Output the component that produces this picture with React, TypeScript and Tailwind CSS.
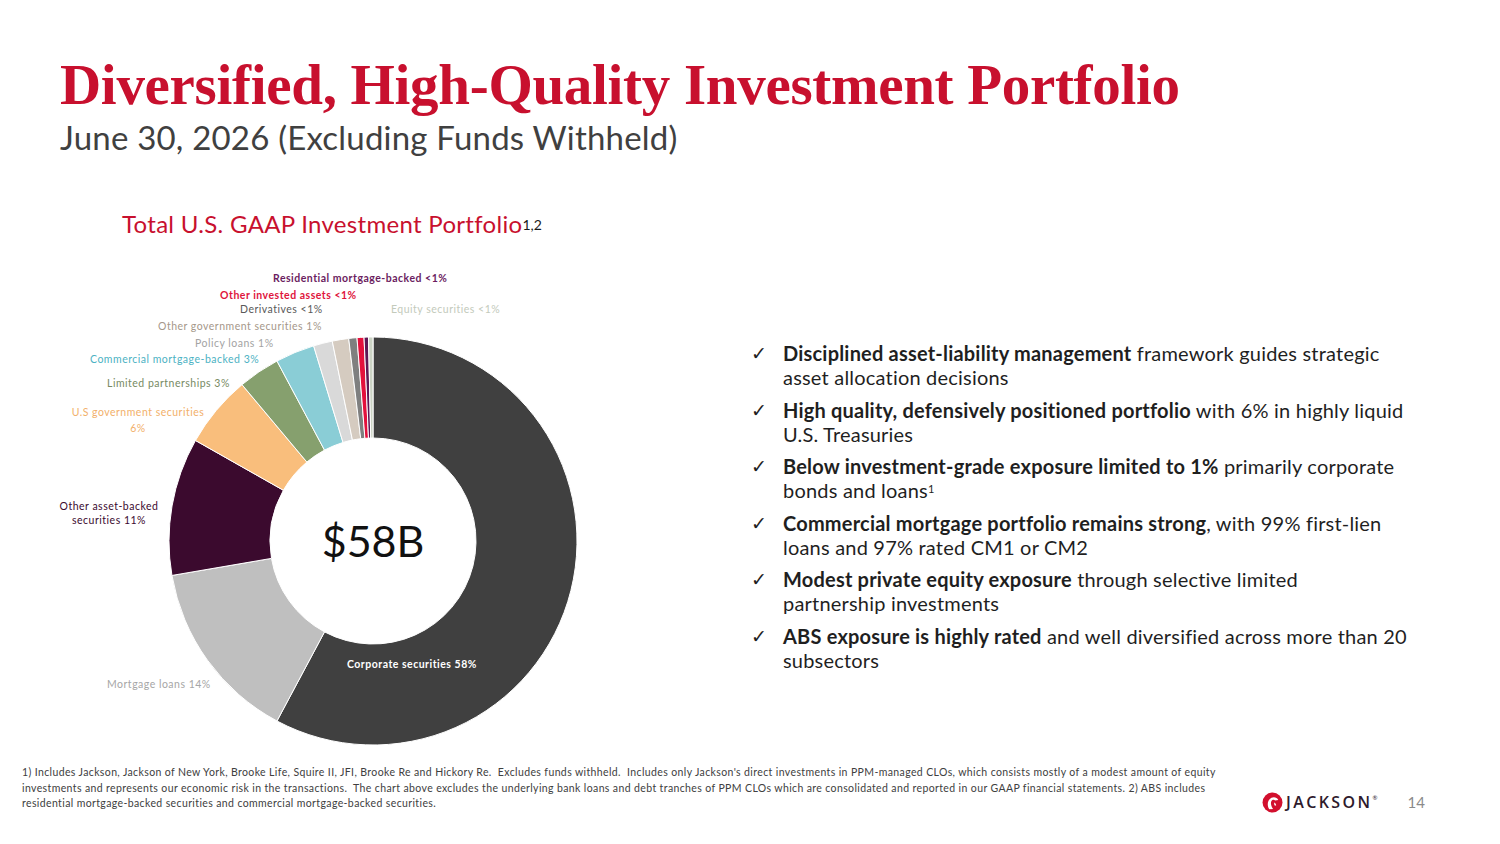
import React from 'react';

type Slice = { name: string; value: number; color: string };

// share of the portfolio, clockwise from 12 o'clock
const slices: Slice[] = [
  { name: 'Corporate securities', value: 57.8, color: '#404040' },
  { name: 'Mortgage loans', value: 14.5, color: '#bfbfbf' },
  { name: 'Other asset-backed securities', value: 10.9, color: '#3b0a2e' },
  { name: 'U.S government securities', value: 5.7, color: '#f9be7c' },
  { name: 'Limited partnerships', value: 3.3, color: '#86a06e' },
  { name: 'Commercial mortgage-backed', value: 3.1, color: '#8acdd6' },
  { name: 'Policy loans', value: 1.5, color: '#d9d9d9' },
  { name: 'Other government securities', value: 1.3, color: '#d5cbc0' },
  { name: 'Derivatives', value: 0.65, color: '#7f7f7f' },
  { name: 'Other invested assets', value: 0.55, color: '#e3103c' },
  { name: 'Residential mortgage-backed', value: 0.35, color: '#5e1755' },
  { name: 'Equity securities', value: 0.35, color: '#cbd3c4' },
];

const CX = 373;
const CY = 303;
const R_OUT = 204;
const R_IN = 103;

const point = (r: number, deg: number) => {
  const a = ((deg - 90) * Math.PI) / 180;
  return [CX + r * Math.cos(a), CY + r * Math.sin(a)];
};

const arcPath = (start: number, end: number) => {
  const large = end - start > 180 ? 1 : 0;
  const [x1, y1] = point(R_OUT, start);
  const [x2, y2] = point(R_OUT, end);
  const [x3, y3] = point(R_IN, end);
  const [x4, y4] = point(R_IN, start);
  return `M${x1} ${y1} A${R_OUT} ${R_OUT} 0 ${large} 1 ${x2} ${y2} L${x3} ${y3} A${R_IN} ${R_IN} 0 ${large} 0 ${x4} ${y4} Z`;
};

const Donut: React.FC = () => {
  const total = slices.reduce((s, d) => s + d.value, 0);
  let acc = 0;
  return (
    <svg width="600" height="512" viewBox="0 0 600 512" className="block">
      {slices.map((s) => {
        const start = (acc / total) * 360;
        acc += s.value;
        const end = (acc / total) * 360;
        return <path key={s.name} d={arcPath(start, end)} fill={s.color} stroke="#ffffff" strokeWidth={1} />;
      })}
    </svg>
  );
};

const bodyFont = { fontFamily: 'Lato, "Noto Sans", sans-serif' };

const bullets: { bold: string; rest: React.ReactNode }[] = [
  { bold: 'Disciplined asset-liability management', rest: <> framework guides strategic<br />asset allocation decisions</> },
  { bold: 'High quality, defensively positioned portfolio', rest: <> with 6% in highly liquid<br />U.S. Treasuries</> },
  { bold: 'Below investment-grade exposure limited to 1%', rest: <> primarily corporate<br />bonds and loans<sup className="text-[11px]">1</sup></> },
  { bold: 'Commercial mortgage portfolio remains strong', rest: <>, with 99% first-lien<br />loans and 97% rated CM1 or CM2</> },
  { bold: 'Modest private equity exposure', rest: <> through selective limited<br />partnership investments</> },
  { bold: 'ABS exposure is highly rated', rest: <> and well diversified across more than 20<br />subsectors</> },
];

const JacksonMark: React.FC = () => (
  <svg width="21" height="21" viewBox="0 0 20 20">
    <circle cx="10" cy="10" r="9.5" fill="#d2102e" />
    <path d="M7 16.5 C4.5 13 5 7.5 9 5.5 C11.5 4.3 14.5 5.2 15.5 7.5 L12.5 8 C11.5 7 9.8 7.2 9 8.6 C8 10.5 8.6 13.5 10.5 16.2 Z" fill="#ffffff" />
    <path d="M11.5 10 C12.8 10.4 13.6 11.6 13.4 13.2 L11.8 12.6 Z" fill="#ffffff" />
  </svg>
);

const App: React.FC = () => {
  return (
    <div className="w-[1500px] h-[844px] bg-white flex flex-col overflow-hidden" style={bodyFont}>
      <header className="pt-[54px] pl-[60px]">
        <h1
          className="text-[57px] leading-[62px] font-bold tracking-[-0.3px] text-[#c8102e]"
          style={{ fontFamily: '"Liberation Serif", "Times New Roman", serif' }}
        >
          Diversified, High-Quality Investment Portfolio
        </h1>
        <p className="mt-[3px] text-[33px] leading-[36px] tracking-[0.2px] text-[#404040]">
          June 30, 2026 (Excluding Funds Withheld)
        </p>
      </header>

      <main className="flex-1 flex">
        <section className="w-[751px] shrink-0">
          <h2 className="mt-[55px] pl-[122px] text-[24px] leading-[28px] tracking-[0.3px] text-[#c8102e]">
            Total U.S. GAAP Investment Portfolio
            <sup className="text-[14px] tracking-normal text-[#1a1a1a] relative -top-[3px]">1,2</sup>
          </h2>
          <div className="relative w-[600px] h-[512px] text-[10.5px] leading-[14px] tracking-[0.5px]">
            <Donut />
            <div className="absolute left-[273px] top-[33px] font-bold text-[#6b1d5f]">Residential mortgage-backed &lt;1%</div>
            <div className="absolute left-[220px] top-[50px] font-bold text-[#e0143c]">Other invested assets &lt;1%</div>
            <div className="absolute left-[240px] top-[64px] text-[#595959]">Derivatives &lt;1%</div>
            <div className="absolute left-[391px] top-[64px] text-[#c3cabb]">Equity securities &lt;1%</div>
            <div className="absolute left-[158px] top-[81px] text-[#a5978a]">Other government securities 1%</div>
            <div className="absolute left-[195px] top-[98px] text-[#a3a3a3]">Policy loans 1%</div>
            <div className="absolute left-[90px] top-[114px] text-[#4cb2c3]">Commercial mortgage-backed 3%</div>
            <div className="absolute left-[107px] top-[138px] text-[#778a63]">Limited partnerships 3%</div>
            <div className="absolute left-[70px] top-[166px] w-[136px] text-center text-[#f2b06a] leading-[16px]">
              U.S government securities
              <br />
              6%
            </div>
            <div className="absolute left-[55px] top-[261px] w-[108px] text-center text-[#3b0a2e]">
              Other asset-backed
              <br />
              securities 11%
            </div>
            <div className="absolute left-[107px] top-[439px] text-[#a6a6a6]">Mortgage loans 14%</div>
            <div className="absolute left-[347px] top-[419px] font-bold text-white">Corporate securities 58%</div>
            <div className="absolute left-[273px] top-[278px] w-[200px] text-center text-[43px] leading-[50px] tracking-normal text-[#111111]">
              $58B
            </div>
          </div>
        </section>

        <section className="pt-[186px]">
          <ul className="flex flex-col gap-[8.6px] text-[20px] leading-[24px] tracking-[0.2px] text-[#1f1f1f]">
            {bullets.map((b) => (
              <li key={b.bold} className="flex">
                <span className="w-[32px] shrink-0 text-[19px]" style={{ fontFamily: '"DejaVu Sans", sans-serif' }}>
                  ✓
                </span>
                <span className="whitespace-nowrap">
                  <b className="font-bold">{b.bold}</b>
                  {b.rest}
                </span>
              </li>
            ))}
          </ul>
        </section>
      </main>

      <footer className="h-[79px] flex">
        <p className="pl-[22px] w-[1230px] shrink-0 text-[10.5px] leading-[15.5px] tracking-[0.38px] text-[#404040] whitespace-nowrap">
          1) Includes Jackson, Jackson of New York, Brooke Life, Squire II, JFI, Brooke Re and Hickory Re.&nbsp; Excludes funds withheld.&nbsp; Includes only Jackson's direct investments in PPM-managed CLOs, which consists mostly of a modest amount of equity
          <br />
          investments and represents our economic risk in the transactions.&nbsp; The chart above excludes the underlying bank loans and debt tranches of PPM CLOs which are consolidated and reported in our GAAP financial statements. 2) ABS includes
          <br />
          residential mortgage-backed securities and commercial mortgage-backed securities.
        </p>
        <div className="ml-[32px] mt-[26px] flex items-center h-[22px]">
          <JacksonMark />
          <span
            className="ml-[3px] text-[16px] leading-[20px] tracking-[0.15em] text-[#2e1a2c]"
            style={{ fontFamily: '"Open Sans", sans-serif', fontWeight: 600 }}
          >
            JACKSON
          </span>
          <sup className="text-[6px] text-[#2e1a2c] -top-[4px] relative">®</sup>
          <span className="ml-[30px] text-[15px] text-[#8a8a8a]">14</span>
        </div>
      </footer>
    </div>
  );
};

export default App;
